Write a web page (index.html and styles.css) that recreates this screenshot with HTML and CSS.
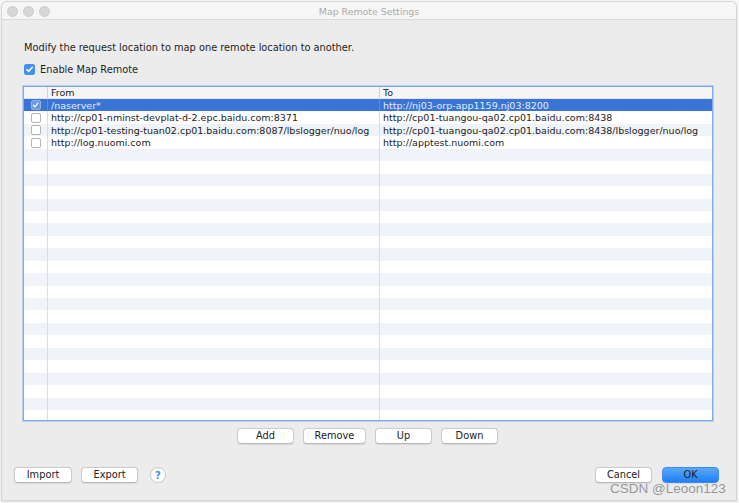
FILE: index.html
```html
<!DOCTYPE html>
<html>
<head>
<meta charset="utf-8">
<link rel="stylesheet" href="styles.css">
</head>
<body>
<div class="window">
  <div class="titlebar">
    <div class="lights"><span></span><span></span><span></span></div>
    <div class="title">Map Remote Settings</div>
  </div>
  <div class="content">
    <p class="desc">Modify the request location to map one remote location to another.</p>
    <div class="enable"><span class="bigcb"><svg width="11" height="11" viewBox="0 0 11 11"><path d="M2.8 5.6 L4.6 7.5 L8.3 3.2" fill="none" stroke="#fff" stroke-width="1.5" stroke-linecap="round" stroke-linejoin="round"/></svg></span><span>Enable Map Remote</span></div>
    <div class="table">
      <div class="row head"><div class="c0"></div><div class="c1">From</div><div class="c2">To</div></div>
      <div class="rows">
        <div class="row sel"><div class="c0"><span class="cb on"><svg width="10" height="10" viewBox="0 0 10 10"><path d="M2.5 5.2 L4.2 7 L7.6 3" fill="none" stroke="#fff" stroke-width="1.3" stroke-linecap="round" stroke-linejoin="round"/></svg></span></div><div class="c1">/naserver*</div><div class="c2">http://nj03-orp-app1159.nj03:8200</div></div>
        <div class="row"><div class="c0"><span class="cb"></span></div><div class="c1">http://cp01-nminst-devplat-d-2.epc.baidu.com:8371</div><div class="c2">http://cp01-tuangou-qa02.cp01.baidu.com:8438</div></div>
        <div class="row alt"><div class="c0"><span class="cb"></span></div><div class="c1">http://cp01-testing-tuan02.cp01.baidu.com:8087/lbslogger/nuo/log</div><div class="c2">http://cp01-tuangou-qa02.cp01.baidu.com:8438/lbslogger/nuo/log</div></div>
        <div class="row"><div class="c0"><span class="cb"></span></div><div class="c1">http://log.nuomi.com</div><div class="c2">http://apptest.nuomi.com</div></div>
        <div class="row alt"><div class="c0"></div><div class="c1"></div><div class="c2"></div></div>
        <div class="row"><div class="c0"></div><div class="c1"></div><div class="c2"></div></div>
        <div class="row alt"><div class="c0"></div><div class="c1"></div><div class="c2"></div></div>
        <div class="row"><div class="c0"></div><div class="c1"></div><div class="c2"></div></div>
        <div class="row alt"><div class="c0"></div><div class="c1"></div><div class="c2"></div></div>
        <div class="row"><div class="c0"></div><div class="c1"></div><div class="c2"></div></div>
        <div class="row alt"><div class="c0"></div><div class="c1"></div><div class="c2"></div></div>
        <div class="row"><div class="c0"></div><div class="c1"></div><div class="c2"></div></div>
        <div class="row alt"><div class="c0"></div><div class="c1"></div><div class="c2"></div></div>
        <div class="row"><div class="c0"></div><div class="c1"></div><div class="c2"></div></div>
        <div class="row alt"><div class="c0"></div><div class="c1"></div><div class="c2"></div></div>
        <div class="row"><div class="c0"></div><div class="c1"></div><div class="c2"></div></div>
        <div class="row alt"><div class="c0"></div><div class="c1"></div><div class="c2"></div></div>
        <div class="row"><div class="c0"></div><div class="c1"></div><div class="c2"></div></div>
        <div class="row alt"><div class="c0"></div><div class="c1"></div><div class="c2"></div></div>
        <div class="row"><div class="c0"></div><div class="c1"></div><div class="c2"></div></div>
        <div class="row alt"><div class="c0"></div><div class="c1"></div><div class="c2"></div></div>
        <div class="row"><div class="c0"></div><div class="c1"></div><div class="c2"></div></div>
        <div class="row alt"><div class="c0"></div><div class="c1"></div><div class="c2"></div></div>
        <div class="row"><div class="c0"></div><div class="c1"></div><div class="c2"></div></div>
        <div class="row alt"><div class="c0"></div><div class="c1"></div><div class="c2"></div></div>
        <div class="row"><div class="c0"></div><div class="c1"></div><div class="c2"></div></div>
        <div class="row alt"><div class="c0"></div><div class="c1"></div><div class="c2"></div></div>
      </div>
    </div>
    <div class="actions">
      <button class="btn">Add</button>
      <button class="btn">Remove</button>
      <button class="btn">Up</button>
      <button class="btn">Down</button>
    </div>
    <div class="footer">
      <div class="left">
        <button class="btn">Import</button>
        <button class="btn">Export</button>
        <span class="help">?</span>
      </div>
      <div class="right">
        <button class="btn">Cancel</button>
        <button class="btn primary">OK</button>
      </div>
    </div>
  </div>
  <div class="watermark">CSDN @Leoon123</div>
</div>
</body>
</html>
```

FILE: styles.css
```css
* { box-sizing: border-box; }
html, body { margin: 0; padding: 0; }
body {
  width: 739px;
  height: 503px;
  background: #f6f6f6;
  font-family: "DejaVu Sans", sans-serif;
  font-size: 9.5px;
  color: #1e1e1e;
  overflow: hidden;
}
.window {
  position: relative;
  margin: 2px 0 0 2px;
  width: 734px;
  height: 498px;
  background: #ececec;
  border-radius: 5px 5px 0 0;
  box-shadow: 0 0 0 1px #d4d4d4, 0 1px 3px rgba(0,0,0,0.18);
  display: flex;
  flex-direction: column;
}
.titlebar {
  height: 18px;
  flex: none;
  background: #f6f6f6;
  border-bottom: 1px solid #d9d9d9;
  border-radius: 5px 5px 0 0;
  display: flex;
  align-items: center;
  position: relative;
}
.lights {
  display: flex;
  gap: 5px;
  padding-left: 5px;
  margin-top: 1px;
}
.lights span {
  width: 11px;
  height: 11px;
  border-radius: 50%;
  background: #d6d6d6;
  border: 1px solid #cdcdcd;
}
.title {
  position: absolute;
  left: 0;
  right: 0;
  text-align: center;
  color: #ababab;
  font-size: 9.4px;
  top: 4px;
}
.content {
  flex: 1;
  display: flex;
  flex-direction: column;
  padding: 0 23px 0 21px;
}
.desc {
  margin: 21px 0 0 1px;
  line-height: 14px;
  font-size: 9.8px;
}
.enable {
  display: flex;
  align-items: center;
  gap: 5px;
  margin: 9px 0 0 1px;
  height: 11px;
  font-size: 9.8px;
}
.bigcb {
  width: 11px;
  height: 11px;
  border-radius: 2.5px;
  background: #3f8ff4;
  display: flex;
}
.table {
  margin-top: 11px;
  height: 335px;
  flex: none;
  background: #fff;
  border: 1px solid #7aa9ee;
  box-shadow: 0 0 0 1px #b8d2f6;
  overflow: hidden;
  display: flex;
  flex-direction: column;
}
.row {
  display: grid;
  grid-template-columns: 24px 332px 1fr;
  height: 12.45px;
  line-height: 13px;
  white-space: nowrap;
}
.row > div { border-right: 1px solid #dcdcdc; overflow: hidden; }
.row > div:last-child { border-right: none; }
.row .c1, .row .c2 { padding-left: 3px; }
.row .c0 { display: flex; align-items: center; justify-content: center; padding-left: 1px; }
.head {
  height: 12px;
  background: #f5f5f5;
  border-bottom: 1px solid #e2e2e2;
  line-height: 12px;
}
.head > div { border-right-color: #d4d4d4; }
.rows { flex: 1; }
.alt { background: #f0f3f8; }
.sel { background: #3a74d5; color: #e3ecfa; }
.sel > div { border-right-color: #5b8bdb; }
.cb {
  width: 10px;
  height: 10px;
  border-radius: 2px;
  border: 1px solid #b3b3b3;
  background: #fff;
  display: flex;
}
.cb.on {
  border: 1px solid #8fb2ea;
  background: #6c9be3;
}
.cb.on svg { margin: -1px 0 0 -1px; }
.actions {
  display: flex;
  justify-content: center;
  gap: 9px;
  margin-top: 7px;
  padding-right: 1px;
}
.btn {
  font-family: "DejaVu Sans", sans-serif;
  font-size: 9.8px;
  color: #222;
  width: 57px;
  height: 16px;
  padding: 0;
  line-height: 14px;
  background: #fff;
  border: 1px solid #cbcbcb;
  border-bottom-color: #b8b8b8;
  border-radius: 4px;
  box-shadow: 0 0.5px 1px rgba(0,0,0,0.08);
}
.actions .btn:nth-child(2) { width: 63px; }
.footer {
  display: flex;
  justify-content: space-between;
  align-items: center;
  margin: 23px -6px 0 -9px;
}
.left, .right { display: flex; align-items: center; gap: 9px; }
.left .btn:first-child { width: 58px; }
.help {
  width: 16px;
  height: 16px;
  border-radius: 50%;
  background: #fff;
  border: 1px solid #cbcbcb;
  color: #3b8ef2;
  font-weight: bold;
  font-size: 10px;
  display: flex;
  align-items: center;
  justify-content: center;
  margin-left: 3px;
}
.right { gap: 10px; }
.primary {
  background: linear-gradient(#5aa8fa, #1f7ff5);
  border-color: #3b8cf0;
  color: #1a1a2a;
}
.watermark {
  position: absolute;
  left: 608px;
  top: 479px;
  font-family: "Liberation Sans", sans-serif;
  font-size: 13.5px;
  color: rgba(120,120,120,0.75);
}
```
